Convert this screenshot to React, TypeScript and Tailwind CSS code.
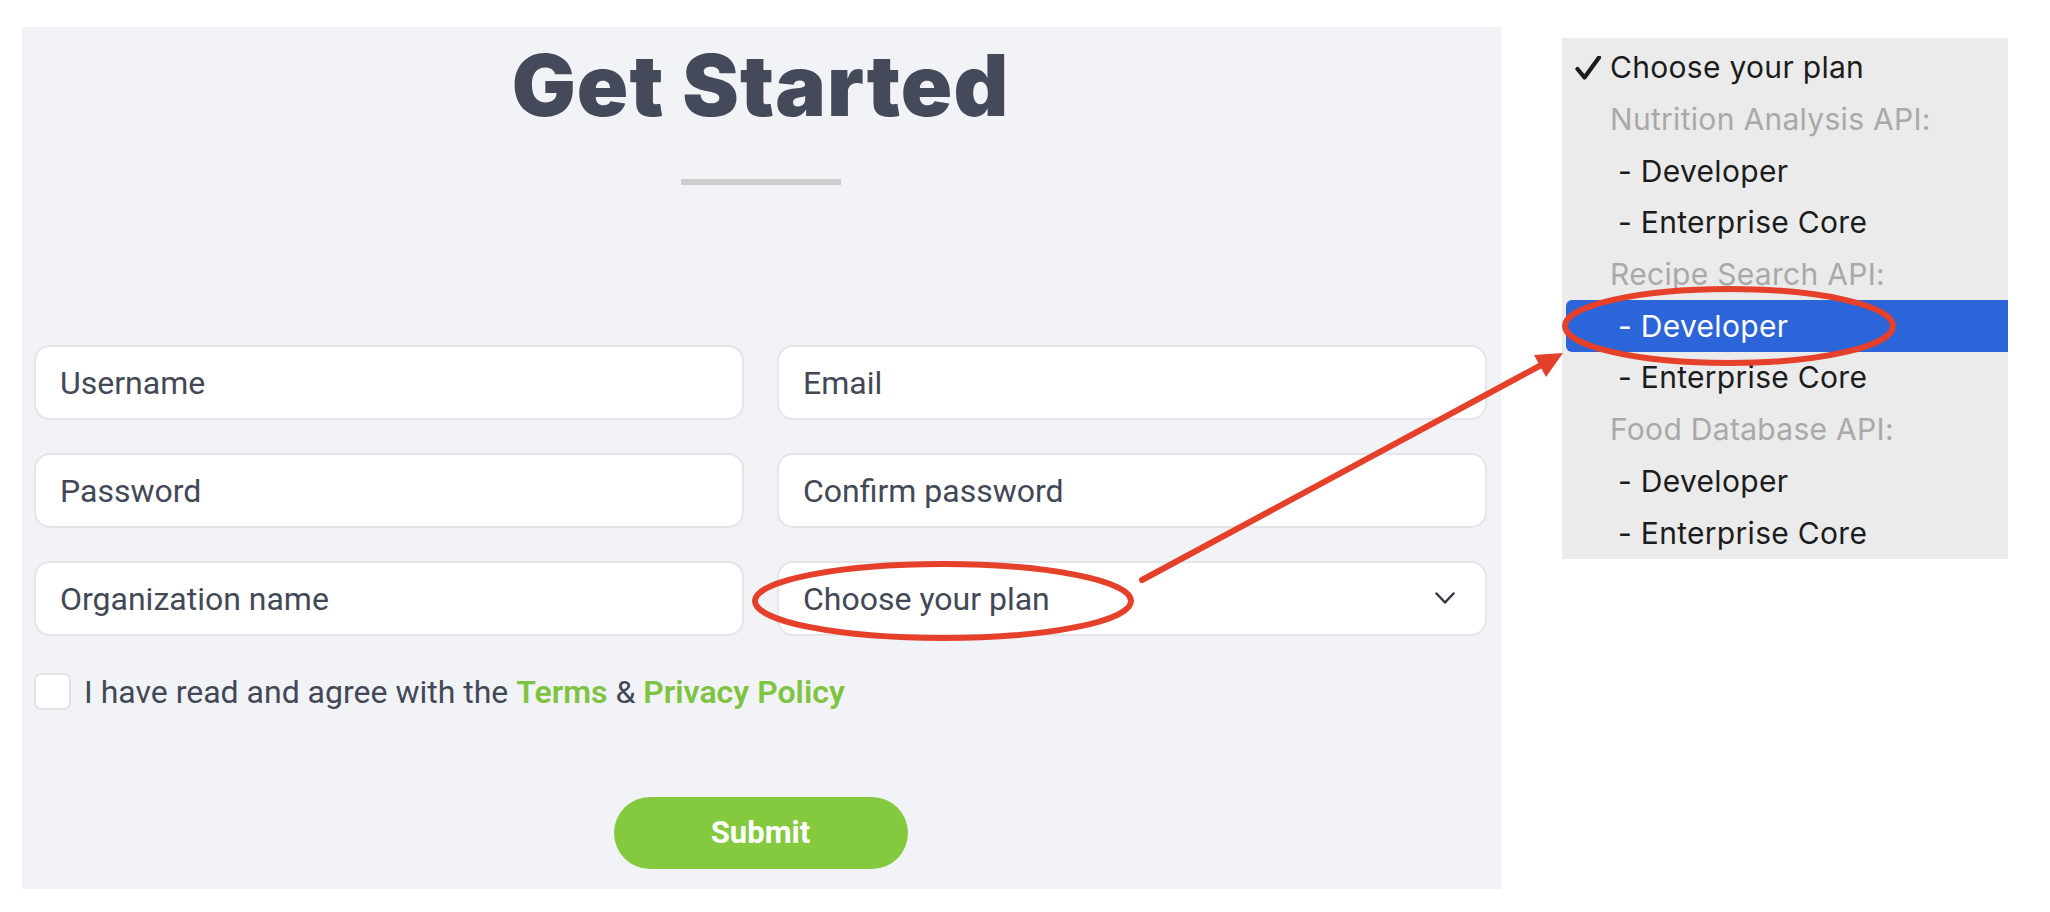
import React from "react";

const fieldCls =
  "h-[75px] rounded-[16px] border-2 border-[#e3e5e9] bg-white flex items-center pl-[24px] pr-[30px] text-[32px] text-[#434857] font-['Roboto',sans-serif]";

function Field({ label }: { label: string }) {
  return (
    <div className={fieldCls}>
      <span>{label}</span>
    </div>
  );
}

function SelectField() {
  return (
    <div className={fieldCls + " justify-between"}>
      <span>Choose your plan</span>
      <svg width="20" height="13" viewBox="0 0 20 13">
        <polyline points="1.5,1.5 10,10.5 18.5,1.5" fill="none" stroke="#333845" strokeWidth="2.5" strokeLinecap="round" strokeLinejoin="round" />
      </svg>
    </div>
  );
}

type Opt = { text: string; kind: "selected" | "group" | "item" | "active" };

const options: Opt[] = [
  { text: "Choose your plan", kind: "selected" },
  { text: "Nutrition Analysis API:", kind: "group" },
  { text: "- Developer", kind: "item" },
  { text: "- Enterprise Core", kind: "item" },
  { text: "Recipe Search API:", kind: "group" },
  { text: "- Developer", kind: "active" },
  { text: "- Enterprise Core", kind: "item" },
  { text: "Food Database API:", kind: "group" },
  { text: "- Developer", kind: "item" },
  { text: "- Enterprise Core", kind: "item" },
];

function Dropdown() {
  return (
    <div className="mt-[11px] w-[446px] h-[521px] bg-[#ebebeb] pt-[4px] font-['Inter',sans-serif] text-[30px] tracking-[0.3px]">
      {options.map((o, i) => {
        if (o.kind === "selected") {
          return (
            <div key={i} className="h-[51.7px] flex items-center text-[#1c1c1c]">
              <svg width="48" height="24" viewBox="0 0 48 24" className="shrink-0">
                <polyline points="15.5,13 22.5,21.5 37,1.5" fill="none" stroke="#1c1c1c" strokeWidth="4.2" strokeLinecap="round" strokeLinejoin="round" />
              </svg>
              <span>{o.text}</span>
            </div>
          );
        }
        if (o.kind === "group") {
          return (
            <div key={i} className="h-[51.7px] flex items-center pl-[48px] text-[#a9a9a9]">
              {o.text}
            </div>
          );
        }
        if (o.kind === "active") {
          return (
            <div key={i} className="h-[51.7px] ml-[4px] flex items-center pl-[52px] bg-[#2c64d9] text-white rounded-l-[6px]">
              {o.text}
            </div>
          );
        }
        return (
          <div key={i} className="h-[51.7px] flex items-center pl-[56px] text-[#1c1c1c]">
            {o.text}
          </div>
        );
      })}
    </div>
  );
}

export default function App() {
  return (
    <div className="relative w-[2050px] h-[912px] bg-white overflow-hidden">
      <div className="flex items-start pl-[22px] pt-[27px] gap-[61px]">
        <div className="w-[1479px] bg-[#f2f3f7] pl-[12px] pr-[14px] pb-[20px] flex flex-col">
          <h1 className="mt-[9px] h-[100px] leading-[100px] text-center text-[85px] font-black text-[#444a59] font-['Inter',sans-serif] tracking-[1px]">
            Get Started
          </h1>
          <div className="mt-[43px] mx-auto w-[160px] h-[6px] bg-[#cdcdcd]" />
          <div className="mt-[160px] grid grid-cols-2 gap-x-[33px] gap-y-[33px]">
            <Field label="Username" />
            <Field label="Email" />
            <Field label="Password" />
            <Field label="Confirm password" />
            <Field label="Organization name" />
            <SelectField />
          </div>
          <div className="mt-[37px] h-[37px] flex items-center gap-[13px] font-['Roboto',sans-serif] text-[32px] leading-none text-[#434857]">
            <span className="w-[37px] h-[37px] rounded-[7px] border-2 border-[#e1e3e7] bg-white shrink-0" />
            <span className="whitespace-nowrap">
              I have read and agree with the{" "}
              <span className="text-[#7fc342] font-semibold">Terms</span> &amp;{" "}
              <span className="text-[#7fc342] font-semibold">Privacy Policy</span>
            </span>
          </div>
          <button className="mt-[87px] mx-auto w-[294px] h-[72px] rounded-full bg-[#84c93e] text-white font-bold text-[31px] font-['Roboto',sans-serif]">
            Submit
          </button>
        </div>
        <Dropdown />
      </div>
      <svg className="absolute inset-0 pointer-events-none" width="2050" height="912" viewBox="0 0 2050 912">
        <ellipse cx="943" cy="601" rx="188" ry="37" fill="none" stroke="#e5402a" strokeWidth="6" />
        <ellipse cx="1729" cy="326" rx="164" ry="37" fill="none" stroke="#e5402a" strokeWidth="6" />
        <line x1="1142" y1="580" x2="1545" y2="363" stroke="#e5402a" strokeWidth="6" strokeLinecap="round" />
        <polygon points="1563,353 1534,355 1546,377" fill="#e5402a" />
      </svg>
    </div>
  );
}
